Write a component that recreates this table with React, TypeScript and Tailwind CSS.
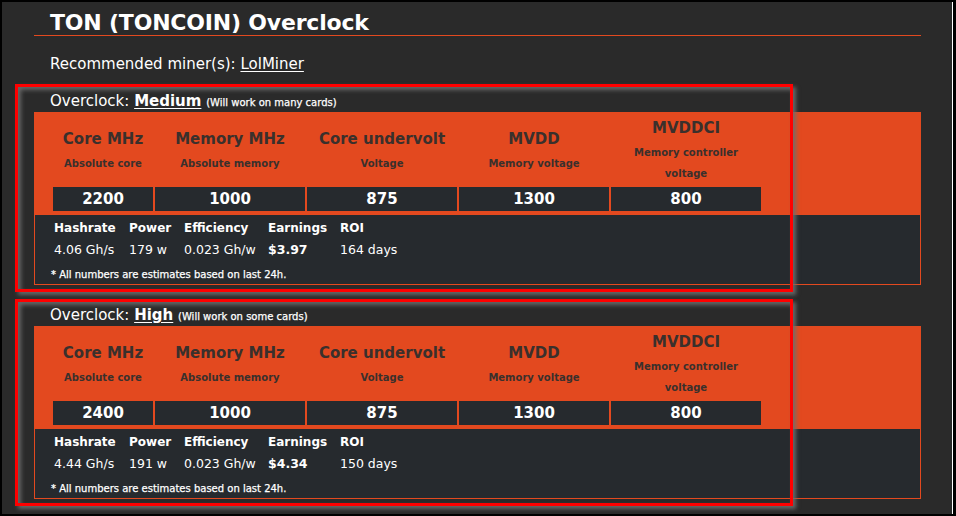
import React from "react";

const cols = [
  { t: "Core MHz", s: ["Absolute core"] },
  { t: "Memory MHz", s: ["Absolute memory"] },
  { t: "Core undervolt", s: ["Voltage"] },
  { t: "MVDD", s: ["Memory voltage"] },
  { t: "MVDDCI", s: ["Memory controller", "voltage"] },
];

const sections = [
  {
    level: "Medium",
    note: "(Will work on many cards)",
    values: ["2200", "1000", "875", "1300", "800"],
    hashrate: "4.06 Gh/s",
    power: "179 w",
    eff: "0.023 Gh/w",
    earn: "$3.97",
    roi: "164 days",
    red: "-top-[5px] h-[208px]",
    mt: "mt-[15px]",
  },
  {
    level: "High",
    note: "(Will work on some cards)",
    values: ["2400", "1000", "875", "1300", "800"],
    hashrate: "4.44 Gh/s",
    power: "191 w",
    eff: "0.023 Gh/w",
    earn: "$4.34",
    roi: "150 days",
    red: "-top-[4px] h-[207px]",
    mt: "mt-[18px]",
  },
];

function Section({ d }: { d: (typeof sections)[number] }) {
  return (
    <div className={`relative ${d.mt}`}>
      <div className="h-[23px] leading-[24px] pl-[16px] text-[15px] text-white whitespace-nowrap">
        Overclock:{" "}
        <span className="font-bold underline underline-offset-2">{d.level}</span>{" "}
        <span className="text-[10px] [-webkit-text-stroke:0.25px_white]">{d.note}</span>
      </div>
      <div className="border border-[#e3491f] h-[173px] flex flex-col">
        <div className="bg-[#e3491f] pl-[18px] pb-[4px]">
          <div className="grid grid-cols-[100px_150px_150px_150px_150px] gap-x-[2px]">
            {cols.map((c) => (
              <div key={c.t} className="h-[72px] flex flex-col items-center justify-center text-[#3a302c] font-bold">
                <div className="text-[15px] leading-[28px] whitespace-nowrap">{c.t}</div>
                {c.s.map((s) => (
                  <div key={s} className="text-[10px] leading-[21px] whitespace-nowrap">{s}</div>
                ))}
              </div>
            ))}
            {d.values.map((v, i) => (
              <div key={i} className="mt-[2px] h-[24px] bg-[#262a2e] flex items-center justify-center text-white font-bold text-[15px]">
                {v}
              </div>
            ))}
          </div>
        </div>
        <div className="flex-1 bg-[#262a2e] text-white">
          <div className="pl-[19px] pt-[4px] grid grid-cols-[75px_55px_84px_72px_100px] text-[12px] leading-[18px] whitespace-nowrap">
            <div className="font-bold">Hashrate</div>
            <div className="font-bold">Power</div>
            <div className="font-bold">Efficiency</div>
            <div className="font-bold">Earnings</div>
            <div className="font-bold">ROI</div>
            <div className="mt-[4px] text-[12.5px]">{d.hashrate}</div>
            <div className="mt-[4px] text-[12.5px]">{d.power}</div>
            <div className="mt-[4px] text-[12.5px]">{d.eff}</div>
            <div className="mt-[4px] text-[12.5px] font-bold">{d.earn}</div>
            <div className="mt-[4px] text-[12.5px]">{d.roi}</div>
          </div>
          <div className="pl-[16px] mt-[9px] text-[10px] leading-[14px] whitespace-nowrap [-webkit-text-stroke:0.25px_white]">
            * All numbers are estimates based on last 24h.
          </div>
        </div>
      </div>
      <div
        className={`absolute -left-[19px] w-[778px] ${d.red} border-[3px] border-[#ff0000] pointer-events-none shadow-[inset_3px_3px_4px_rgba(110,110,110,0.9),3px_3px_4px_rgba(110,110,110,0.9)]`}
      />
    </div>
  );
}

export default function App() {
  return (
    <div className="w-[956px] h-[516px] bg-black pt-[2px] pl-[2px] pr-[3px] pb-[2px] font-['DejaVu_Sans',Verdana,sans-serif]">
      <div className="h-[512px] bg-[#2a2a2a] border-r border-white pl-[32px] pt-[7px] overflow-hidden">
        <div className="w-[887px]">
          <div className="h-[26px] leading-[27px] pl-[16px] text-[22px] font-bold text-white whitespace-nowrap tracking-[-0.2px]">
            TON (TONCOIN) Overclock
          </div>
          <div className="h-[1px] bg-[#e3491f]" />
          <div className="mt-[18px] h-[20px] leading-[20px] pl-[16px] text-[15px] text-white whitespace-nowrap">
            Recommended miner(s): <span className="underline underline-offset-2">LolMiner</span>
          </div>
          {sections.map((d) => (
            <Section key={d.level} d={d} />
          ))}
        </div>
      </div>
    </div>
  );
}
